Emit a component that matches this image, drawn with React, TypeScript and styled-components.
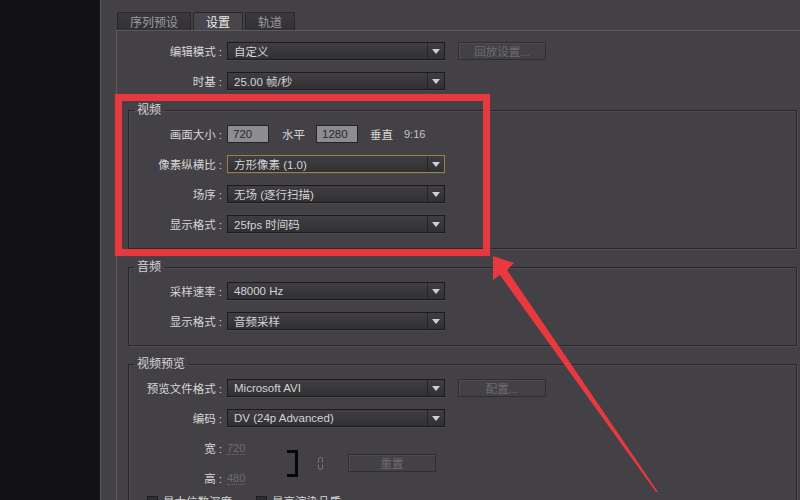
import React from "react";
import styled, { createGlobalStyle } from "styled-components";

const GlobalStyle = createGlobalStyle`
  html, body {
    margin: 0;
    padding: 0;
    background: #121114;
  }
  body {
    font-family: "Liberation Sans", "Noto Sans CJK SC", sans-serif;
    font-size: 11.5px;
    color: #d2d2d2;
  }
  * {
    box-sizing: border-box;
  }
`;

interface SelectFieldProps {
  label: string;
  value: string;
  focused?: boolean;
  inGroup?: boolean;
  children?: React.ReactNode;
}

const SelectField: React.FC<SelectFieldProps> = ({ label, value, focused, inGroup, children }) => (
  <Row>
    <Label $w={inGroup ? 98 : 99}>
      {label}
      <Colon>:</Colon>
    </Label>
    <Select $focused={focused}>
      <SelectValue>{value}</SelectValue>
      <SelectArrow>
        <Caret />
      </SelectArrow>
    </Select>
    {children}
  </Row>
);

const App: React.FC = () => {
  return (
    <Page>
      <GlobalStyle />
      <SideDark />
      <Panel>
        <TabBar>
          <Tab>序列预设</Tab>
          <Tab $active>设置</Tab>
          <Tab>轨道</Tab>
        </TabBar>
        <Content>
          <TopStack>
            <SelectField label="编辑模式" value="自定义">
              <GhostButton>回放设置...</GhostButton>
            </SelectField>
            <SelectField label="时基" value="25.00 帧/秒" />
          </TopStack>

          <Group>
            <Legend>视频</Legend>
            <Stack>
              <Row>
                <Label $w={98}>
                  画面大小<Colon>:</Colon>
                </Label>
                <NumberBox>720</NumberBox>
                <Unit $gap={13}>水平</Unit>
                <NumberBox $gap={11}>1280</NumberBox>
                <Unit $gap={12}>垂直</Unit>
                <Ratio>9:16</Ratio>
              </Row>
              <SelectField inGroup focused label="像素纵横比" value="方形像素 (1.0)" />
              <SelectField inGroup label="场序" value="无场 (逐行扫描)" />
              <SelectField inGroup label="显示格式" value="25fps 时间码" />
            </Stack>
          </Group>

          <Group>
            <Legend>音频</Legend>
            <Stack>
              <SelectField inGroup label="采样速率" value="48000 Hz" />
              <SelectField inGroup label="显示格式" value="音频采样" />
            </Stack>
          </Group>

          <Group $open>
            <Legend>视频预览</Legend>
            <Stack>
              <SelectField inGroup label="预览文件格式" value="Microsoft AVI">
                <GhostButton>配置...</GhostButton>
              </SelectField>
              <SelectField inGroup label="编码" value="DV (24p Advanced)" />
              <DimBlock>
                <DimFields>
                  <Row>
                    <Label $w={98}>
                      宽<Colon>:</Colon>
                    </Label>
                    <DimValue>720</DimValue>
                  </Row>
                  <Row>
                    <Label $w={98}>
                      高<Colon>:</Colon>
                    </Label>
                    <DimValue>480</DimValue>
                  </Row>
                </DimFields>
                <Bracket />
                <LinkIcon width="7" height="15" viewBox="0 0 7 15">
                  <path d="M1.5 6.5 V3.5 a2 2 0 0 1 4 0 V6.5 M1.5 8.5 V11.5 a2 2 0 0 0 4 0 V8.5" />
                </LinkIcon>
                <GhostButton $gap={24}>重置</GhostButton>
              </DimBlock>
              <CheckRow>
                <CheckItem>
                  <CheckBox />
                  最大位数深度
                </CheckItem>
                <CheckItem>
                  <CheckBox />
                  最高渲染品质
                </CheckItem>
              </CheckRow>
            </Stack>
          </Group>
        </Content>
      </Panel>

      <Highlight />
      <ArrowLayer width="800" height="500" viewBox="0 0 800 500">
        <polygon points="493,256 514,263 507,270 658,492 656,492 500,275 493,280" />
      </ArrowLayer>
    </Page>
  );
};

export default App;

const Page = styled.div`
  position: relative;
  display: flex;
  width: 800px;
  height: 500px;
  overflow: hidden;
  background: #121114;
`;

const SideDark = styled.div`
  flex: none;
  width: 101px;
  background: #121114;
  border-right: 1px solid #5a5960;
`;

const Panel = styled.div`
  flex: 1;
  min-width: 0;
  display: flex;
  flex-direction: column;
  padding: 12px 0 0 15px;
  background: #434145;
`;

const TabBar = styled.div`
  display: flex;
  gap: 2px;
  height: 20px;
  margin-left: 1px;
`;

const Tab = styled.div<{ $active?: boolean }>`
  display: flex;
  align-items: center;
  padding: 0 12px;
  font-size: 12px;
  border: 1px solid #27262a;
  border-bottom: none;
  border-radius: 2px 2px 0 0;
  background: ${(p) => (p.$active ? "#48464a" : "linear-gradient(#3b393d, #333135)")};
  color: ${(p) => (p.$active ? "#ececec" : "#9d9ca1")};
`;

const Content = styled.div`
  flex: 1;
  display: flex;
  flex-direction: column;
  padding: 11px 3px 0 11px;
  border-top: 1px solid #5b5a5f;
  border-left: 1px solid #5b5a5f;
`;

const Stack = styled.div`
  display: flex;
  flex-direction: column;
  gap: 12px;
`;

const TopStack = styled(Stack)`
  margin-bottom: 2px;
`;

const Row = styled.div`
  display: flex;
  align-items: center;
  height: 18px;
`;

const Label = styled.div<{ $w: number }>`
  flex: none;
  width: ${(p) => p.$w}px;
  padding-right: 5px;
  text-align: right;
  white-space: nowrap;
  color: #d6d6d6;
`;

const Colon = styled.span`
  margin-left: 3px;
`;

const Select = styled.div<{ $focused?: boolean }>`
  flex: none;
  display: flex;
  width: 218px;
  height: 18px;
  border: 1px solid ${(p) => (p.$focused ? "#9c8040" : "#1b1a1d")};
  background: linear-gradient(#403e42, #313033);
  box-shadow: 0 1px 0 #4d4b50;
`;

const SelectValue = styled.div`
  flex: 1;
  display: flex;
  align-items: center;
  padding-left: 6px;
  white-space: nowrap;
  color: #d4d4d4;
`;

const SelectArrow = styled.div`
  flex: none;
  width: 17px;
  display: flex;
  align-items: center;
  justify-content: center;
  border-left: 1px solid #252427;
`;

const Caret = styled.span`
  width: 0;
  height: 0;
  border-left: 4px solid transparent;
  border-right: 4px solid transparent;
  border-top: 5px solid #d0d0d0;
`;

const NumberBox = styled.div<{ $gap?: number }>`
  flex: none;
  display: flex;
  align-items: center;
  width: 42px;
  height: 18px;
  margin-left: ${(p) => p.$gap ?? 0}px;
  padding-left: 5px;
  border: 1px solid #232225;
  background: #8d8c90;
  color: #2a292c;
`;

const Unit = styled.span<{ $gap: number }>`
  margin-left: ${(p) => p.$gap}px;
  color: #d6d6d6;
`;

const Ratio = styled.span`
  margin-left: 11px;
  font-size: 11px;
  color: #c4c4c4;
`;

const GhostButton = styled.div<{ $gap?: number }>`
  flex: none;
  display: flex;
  align-items: center;
  justify-content: center;
  width: 88px;
  height: 18px;
  margin-left: ${(p) => p.$gap ?? 13}px;
  border: 1px solid #2f2e31;
  box-shadow: inset 1px 1px 0 #4e4c51;
  color: #6e6c71;
`;

const Group = styled.fieldset<{ $open?: boolean }>`
  margin: 11px 0 0;
  padding: 8px 0 ${(p) => (p.$open ? 40 : 15)}px;
  min-width: 0;
  border: 1px solid #28272a;
  box-shadow: 1px 1px 0 #504e53, inset 1px 1px 0 #4c4a4f;
`;

const Legend = styled.legend`
  margin-left: 5px;
  padding: 0 3px;
  line-height: 14px;
  font-size: 12px;
  color: #d6d6d6;
`;

const DimBlock = styled.div`
  display: flex;
  align-items: center;
`;

const DimFields = styled.div`
  flex: none;
  width: 158px;
  display: flex;
  flex-direction: column;
  gap: 12px;
`;

const DimValue = styled.span`
  font-size: 11px;
  color: #6c6b70;
  border-bottom: 1px dotted #6c6b70;
  line-height: 12px;
`;

const Bracket = styled.div`
  flex: none;
  width: 11px;
  height: 27px;
  border: 3px solid #070707;
  border-left: none;
`;

const LinkIcon = styled.svg`
  flex: none;
  margin-left: 19px;
  fill: none;
  stroke: #78777c;
  stroke-width: 1;
`;

const CheckRow = styled.div`
  display: flex;
  gap: 24px;
  margin-top: -6px;
  padding-left: 18px;
`;

const CheckItem = styled.div`
  display: flex;
  align-items: center;
  gap: 5px;
  color: #d6d6d6;
`;

const CheckBox = styled.span`
  width: 11px;
  height: 11px;
  border: 1px solid #1f1e21;
  background: #2f2d31;
`;

const Highlight = styled.div`
  position: absolute;
  left: 115px;
  top: 94px;
  width: 375px;
  height: 162px;
  border: 7px solid #e6383f;
  box-shadow: 0 0 1px rgba(230, 56, 63, 0.7), inset 0 0 1px rgba(230, 56, 63, 0.7);
  pointer-events: none;
`;

const ArrowLayer = styled.svg`
  position: absolute;
  left: 0;
  top: 0;
  pointer-events: none;
  fill: #e9393f;
`;
